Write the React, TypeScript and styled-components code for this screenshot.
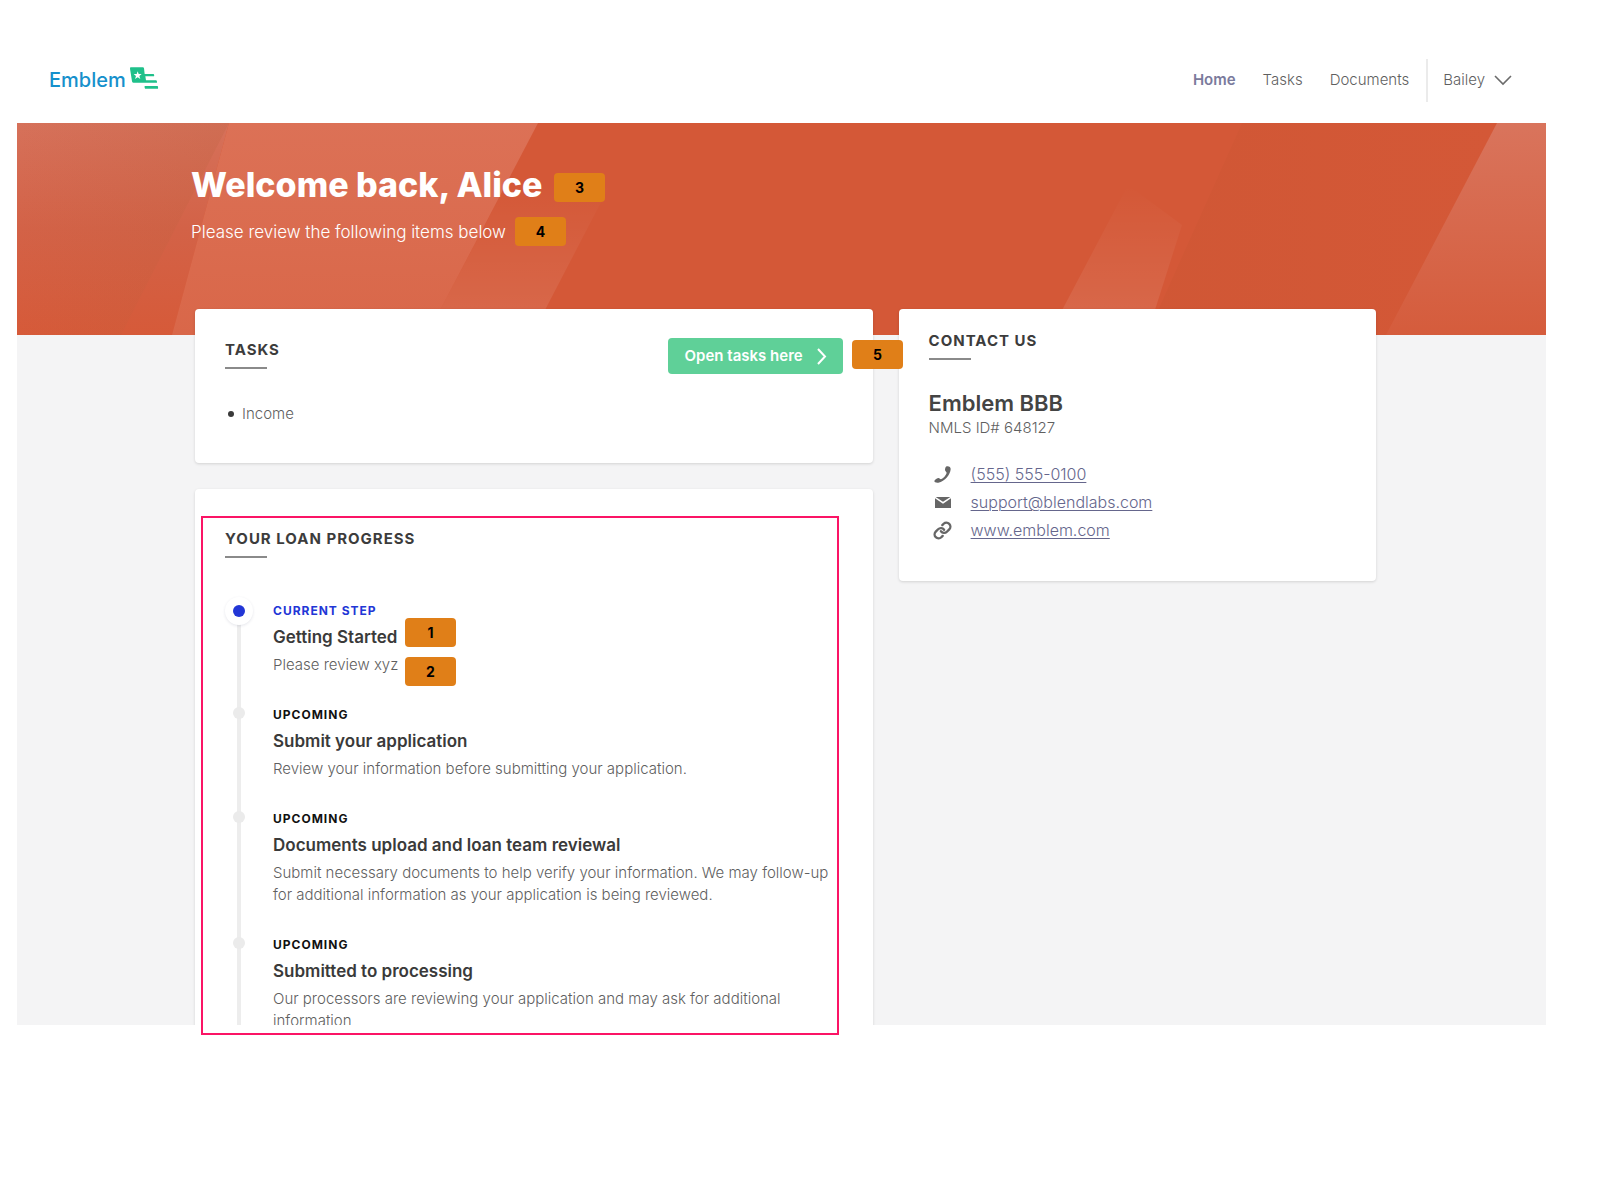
import React from "react";
import styled, { createGlobalStyle, css } from "styled-components";
import { Link as LinkIcon } from "lucide-react";

const GlobalStyle = createGlobalStyle`
  *, *::before, *::after { box-sizing: border-box; }
  body {
    margin: 0;
    background: #fff;
    color: #5f5f5f;
    font-family: Inter, "Liberation Sans", Arial, sans-serif;
    font-size: 15px;
    font-weight: 300;
    line-height: 20px;
  }
  h1, h2, h3, p, ul, ol { margin: 0; padding: 0; }
  ul, ol { list-style: none; }
`;

const Sheet = styled.div`
  position: relative;
  min-height: 100vh;
  padding: 37px 54px 48px 17px;
`;

const Viewport = styled.div`
  max-height: 988px;
  overflow: hidden;
  background: #f4f4f5;
`;

const Header = styled.header`
  display: flex;
  align-items: center;
  justify-content: space-between;
  height: 86px;
  padding: 0 34px 0 32px;
  background: #fff;
`;

const Logo = styled.a`
  display: flex;
  align-items: center;
  gap: 3px;
  color: #1690cc;
  font-size: 20px;
  font-weight: 500;
  line-height: 24px;
  text-decoration: none;

  svg {
    margin-bottom: 4px;
  }
`;

const Nav = styled.nav`
  display: flex;
  align-items: center;
  gap: 27px;
`;

const NavLink = styled.a<{ $active?: boolean }>`
  color: ${(p) => (p.$active ? "#7a7a9c" : "#5f5f5f")};
  font-weight: ${(p) => (p.$active ? 600 : 300)};
  text-decoration: none;
`;

const UserButton = styled.button`
  display: flex;
  align-items: center;
  gap: 9px;
  height: 43px;
  margin-left: -10px;
  padding: 0 0 0 15px;
  border: 0;
  border-left: 2px solid #ebebeb;
  background: none;
  color: #5f5f5f;
  font: inherit;
`;

const Hero = styled.section`
  position: relative;
  height: 212px;
  padding: 42px 174px 0;
  background: #d45837;
  color: #fff;
`;

const HeroArt = styled.svg`
  position: absolute;
  inset: 0;
  width: 100%;
  height: 100%;
`;

const HeroTitle = styled.h1`
  position: relative;
  font-size: 34px;
  font-weight: 800;
  line-height: 40px;
`;

const HeroText = styled.p`
  position: relative;
  margin-top: 17px;
  font-size: 17px;
  line-height: 20px;
`;

const Columns = styled.main`
  position: relative;
  display: grid;
  grid-template-columns: 677fr 477fr;
  align-items: start;
  gap: 26px;
  margin-top: -26px;
  padding: 0 170px 0 178px;
`;

const Stack = styled.div`
  display: grid;
  gap: 26px;
`;

const Card = styled.section<{ $top: number; $bottom: number }>`
  padding: ${(p) => p.$top}px 30px ${(p) => p.$bottom}px;
  border-radius: 4px;
  background: #fff;
  box-shadow: 0 1px 3px rgba(0, 0, 0, 0.14);
`;

const CardHeader = styled.div`
  display: flex;
  align-items: flex-start;
  justify-content: space-between;
`;

const CardTitle = styled.h2<{ $inset?: boolean }>`
  margin-top: ${(p) => (p.$inset ? 2 : 0)}px;
  color: #3c3c3c;
  font-size: 15px;
  font-weight: 700;
  letter-spacing: 1px;
  line-height: 20px;

  &::after {
    content: "";
    display: block;
    width: 42px;
    height: 2px;
    margin-top: 7px;
    background: #8a8a8a;
  }
`;

const OpenButton = styled.button`
  display: flex;
  align-items: center;
  justify-content: space-between;
  width: 175px;
  height: 36px;
  padding: 0 16px 0 17px;
  border: 0;
  border-radius: 4px;
  background: #5fd098;
  color: #fff;
  font: inherit;
  font-weight: 600;
`;

const TaskList = styled.ul`
  margin-top: 30px;
`;

const TaskItem = styled.li`
  display: flex;
  align-items: center;
  gap: 8px;
  padding-left: 3px;

  &::before {
    content: "";
    width: 6px;
    height: 6px;
    border-radius: 50%;
    background: #3a3a3a;
  }
`;

const Steps = styled.ol`
  margin-top: 45px;
`;

const Step = styled.li`
  display: grid;
  grid-template-columns: 28px 1fr;
  gap: 20px;
`;

const Rail = styled.div`
  display: flex;
  flex-direction: column;
  align-items: center;
  background: linear-gradient(#ededed, #ededed) center / 4px 100% no-repeat;
`;

const Dot = styled.span<{ $current?: boolean }>`
  width: 12px;
  height: 12px;
  border-radius: 50%;
  background: #ebebeb;

  ${(p) =>
    p.$current &&
    css`
      display: flex;
      align-items: center;
      justify-content: center;
      width: 28px;
      height: 28px;
      margin-top: -6px;
      background: #fff;
      box-shadow: 0 1px 3px rgba(40, 50, 90, 0.12);

      &::before {
        content: "";
        width: 12px;
        height: 12px;
        border-radius: 50%;
        background: #2236d6;
      }
    `}
`;

const StepBody = styled.div`
  padding-bottom: 31px;
`;

const StepLabel = styled.p<{ $current?: boolean }>`
  color: ${(p) => (p.$current ? "#2236d6" : "#111")};
  font-size: 12px;
  font-weight: 700;
  letter-spacing: 1px;
  line-height: 16px;
`;

const StepTitle = styled.h3`
  margin-top: 6px;
  color: #3a3a3a;
  font-size: 17px;
  font-weight: 600;
  line-height: 24px;
`;

const StepText = styled.p`
  margin-top: 5px;
  line-height: 22px;
`;

const Company = styled.h3`
  margin-top: 28px;
  color: #444;
  font-size: 22px;
  font-weight: 600;
  line-height: 30px;
`;

const License = styled.p`
  line-height: 20px;
`;

const ContactList = styled.ul`
  margin-top: 22px;
`;

const ContactRow = styled.li`
  display: grid;
  grid-template-columns: 28px 1fr;
  align-items: center;
  gap: 14px;
  height: 28px;
  color: #666;

  svg {
    justify-self: center;
  }
`;

const ContactLink = styled.a`
  justify-self: start;
  color: #65668c;
  font-size: 16px;
  text-decoration-thickness: 1px;
  text-underline-offset: 2px;
`;

const Marker = styled.span<{ $x: number; $y: number }>`
  position: absolute;
  left: ${(p) => p.$x}px;
  top: ${(p) => p.$y}px;
  display: flex;
  align-items: center;
  justify-content: center;
  width: 51px;
  height: 29px;
  border-radius: 4px;
  background: #e07f18;
  color: #000;
  font-size: 14px;
  font-weight: 700;
`;

const Highlight = styled.div`
  position: absolute;
  left: 201px;
  top: 516px;
  width: 638px;
  height: 519px;
  border: 2px solid #fb1465;
  pointer-events: none;
`;

const steps = [
  { label: "CURRENT STEP", title: "Getting Started", text: "Please review xyz", current: true },
  {
    label: "UPCOMING",
    title: "Submit your application",
    text: "Review your information before submitting your application.",
  },
  {
    label: "UPCOMING",
    title: "Documents upload and loan team reviewal",
    text: "Submit necessary documents to help verify your information. We may follow-up for additional information as your application is being reviewed.",
  },
  {
    label: "UPCOMING",
    title: "Submitted to processing",
    text: "Our processors are reviewing your application and may ask for additional information",
  },
];

const markers = [
  { n: 1, x: 405, y: 618 },
  { n: 2, x: 405, y: 657 },
  { n: 3, x: 554, y: 173 },
  { n: 4, x: 515, y: 217 },
  { n: 5, x: 852, y: 340 },
];

const FlagIcon = () => (
  <svg width="30" height="24" viewBox="0 0 90 72" fill="#1fc08a" aria-hidden="true">
    <path d="M5 4H42Q44 4 45 7L47 24H74Q77 28 75 31H49L51 43H82Q85 47 84 50H13Q9 50 9 46L3 8Q3 4 5 4Z" />
    <path d="M47 60H86Q88 64 87 68H48Q46 64 47 60Z" />
    <path fill="#fff" d="M26 16l3 8 9 0-7 6 3 9-8-5-8 5 3-9-7-6 9 0z" />
  </svg>
);

const ChevronDown = () => (
  <svg width="18" height="11" viewBox="0 0 18 11" fill="none" stroke="#6b6b6b" strokeWidth="1.6" aria-hidden="true">
    <path d="M1 1l8 8 8-8" />
  </svg>
);

const ChevronRight = () => (
  <svg width="10" height="17" viewBox="0 0 10 17" fill="none" stroke="#fff" strokeWidth="2" aria-hidden="true">
    <path d="M1 1l7 7.500-7 7.500" />
  </svg>
);

const PhoneIcon = () => (
  <svg width="17" height="17" viewBox="0 0 51 51" fill="currentColor" aria-hidden="true">
    <path d="M38 1C46 0 50 4 50 9C49 26 33 46 13 50C6 51 1 48 1 45C2 41 10 36 14 36C17 36 18 40 21 40C28 37 36 28 38 21C38 18 33 15 33 12C33 7 35 2 38 1Z" />
  </svg>
);

const MailIcon = () => (
  <svg width="16" height="11" viewBox="0 0 48 33" fill="currentColor" aria-hidden="true">
    <path d="M2 0H46L24 14Z" />
    <path d="M0 4L24 20L48 4V33H0Z" />
  </svg>
);

export default function App() {
  return (
    <>
      <GlobalStyle />
      <Sheet>
        <Viewport>
          <Header>
            <Logo href="#home">
              Emblem
              <FlagIcon />
            </Logo>
            <Nav>
              <NavLink href="#home" $active>Home</NavLink>
              <NavLink href="#tasks">Tasks</NavLink>
              <NavLink href="#documents">Documents</NavLink>
              <UserButton type="button">
                Bailey
                <ChevronDown />
              </UserButton>
            </Nav>
          </Header>

          <Hero>
            <HeroArt viewBox="0 0 1529 212" preserveAspectRatio="none" aria-hidden="true">
              <defs>
                <linearGradient id="edge" x1="0" y1="0" x2="0" y2="1">
                  <stop offset="0" stopColor="#d6715a" />
                  <stop offset="0.5" stopColor="#d36247" />
                  <stop offset="1" stopColor="#d65a39" />
                </linearGradient>
                <linearGradient id="dusk" x1="0" y1="0" x2="1" y2="0">
                  <stop offset="0" stopColor="#b8603c" stopOpacity="0" />
                  <stop offset="1" stopColor="#b8603c" stopOpacity="0.22" />
                </linearGradient>
                <linearGradient id="band" x1="0" y1="0" x2="0" y2="1">
                  <stop offset="0" stopColor="#dc7156" />
                  <stop offset="1" stopColor="#d96749" />
                </linearGradient>
                <linearGradient id="rise" x1="0" y1="0" x2="0" y2="1">
                  <stop offset="0" stopColor="#fff" stopOpacity="0" />
                  <stop offset="1" stopColor="#fff" stopOpacity="0.11" />
                </linearGradient>
                <linearGradient id="shade" x1="0" y1="0" x2="1" y2="0">
                  <stop offset="0" stopColor="#c65430" stopOpacity="0.28" />
                  <stop offset="1" stopColor="#c65430" stopOpacity="0" />
                </linearGradient>
                <linearGradient id="side" x1="0" y1="0" x2="0" y2="1">
                  <stop offset="0" stopColor="#d9745c" />
                  <stop offset="1" stopColor="#d55c3c" />
                </linearGradient>
              </defs>
              <path fill="url(#edge)" d="M0 0H212L155 212H0Z" />
              <path fill="url(#dusk)" d="M0 0H212L104 212H0Z" />
              <path fill="url(#band)" d="M212 0H521L410 212H155L104 212Z" opacity="0" />
              <path fill="url(#band)" d="M212 0H521L410 212H155Z" />
              <path fill="url(#rise)" d="M490 60L594 60L515 212H410Z" />
              <path fill="url(#rise)" d="M1111 62L1165 102L1130 212H1032Z" />
              <path fill="url(#shade)" d="M1225 0H1480L1369 212H1130Z" />
              <path fill="url(#side)" d="M1480 0H1529V212H1369Z" />
            </HeroArt>
            <HeroTitle>Welcome back, Alice</HeroTitle>
            <HeroText>Please review the following items below</HeroText>
          </Hero>

          <Columns>
            <Stack>
              <Card $top={29} $bottom={39}>
                <CardHeader>
                  <CardTitle $inset>TASKS</CardTitle>
                  <OpenButton type="button">
                    Open tasks here
                    <ChevronRight />
                  </OpenButton>
                </CardHeader>
                <TaskList>
                  <TaskItem>Income</TaskItem>
                </TaskList>
              </Card>

              <Card $top={40} $bottom={40}>
                <CardTitle>YOUR LOAN PROGRESS</CardTitle>
                <Steps>
                  {steps.map((s) => (
                    <Step key={s.title}>
                      <Rail>
                        <Dot $current={s.current} />
                      </Rail>
                      <StepBody>
                        <StepLabel $current={s.current}>{s.label}</StepLabel>
                        <StepTitle>{s.title}</StepTitle>
                        <StepText>{s.text}</StepText>
                      </StepBody>
                    </Step>
                  ))}
                </Steps>
              </Card>
            </Stack>

            <Card $top={22} $bottom={37}>
              <CardTitle>CONTACT US</CardTitle>
              <Company>Emblem BBB</Company>
              <License>NMLS ID# 648127</License>
              <ContactList>
                <ContactRow>
                  <PhoneIcon />
                  <ContactLink href="tel:5555550100">(555) 555-0100</ContactLink>
                </ContactRow>
                <ContactRow>
                  <MailIcon />
                  <ContactLink href="mailto:support@blendlabs.com">support@blendlabs.com</ContactLink>
                </ContactRow>
                <ContactRow>
                  <LinkIcon size={19} strokeWidth={3} />
                  <ContactLink href="#site">www.emblem.com</ContactLink>
                </ContactRow>
              </ContactList>
            </Card>
          </Columns>
        </Viewport>

        <Highlight />
        {markers.map((m) => (
          <Marker key={m.n} $x={m.x} $y={m.y}>{m.n}</Marker>
        ))}
      </Sheet>
    </>
  );
}
